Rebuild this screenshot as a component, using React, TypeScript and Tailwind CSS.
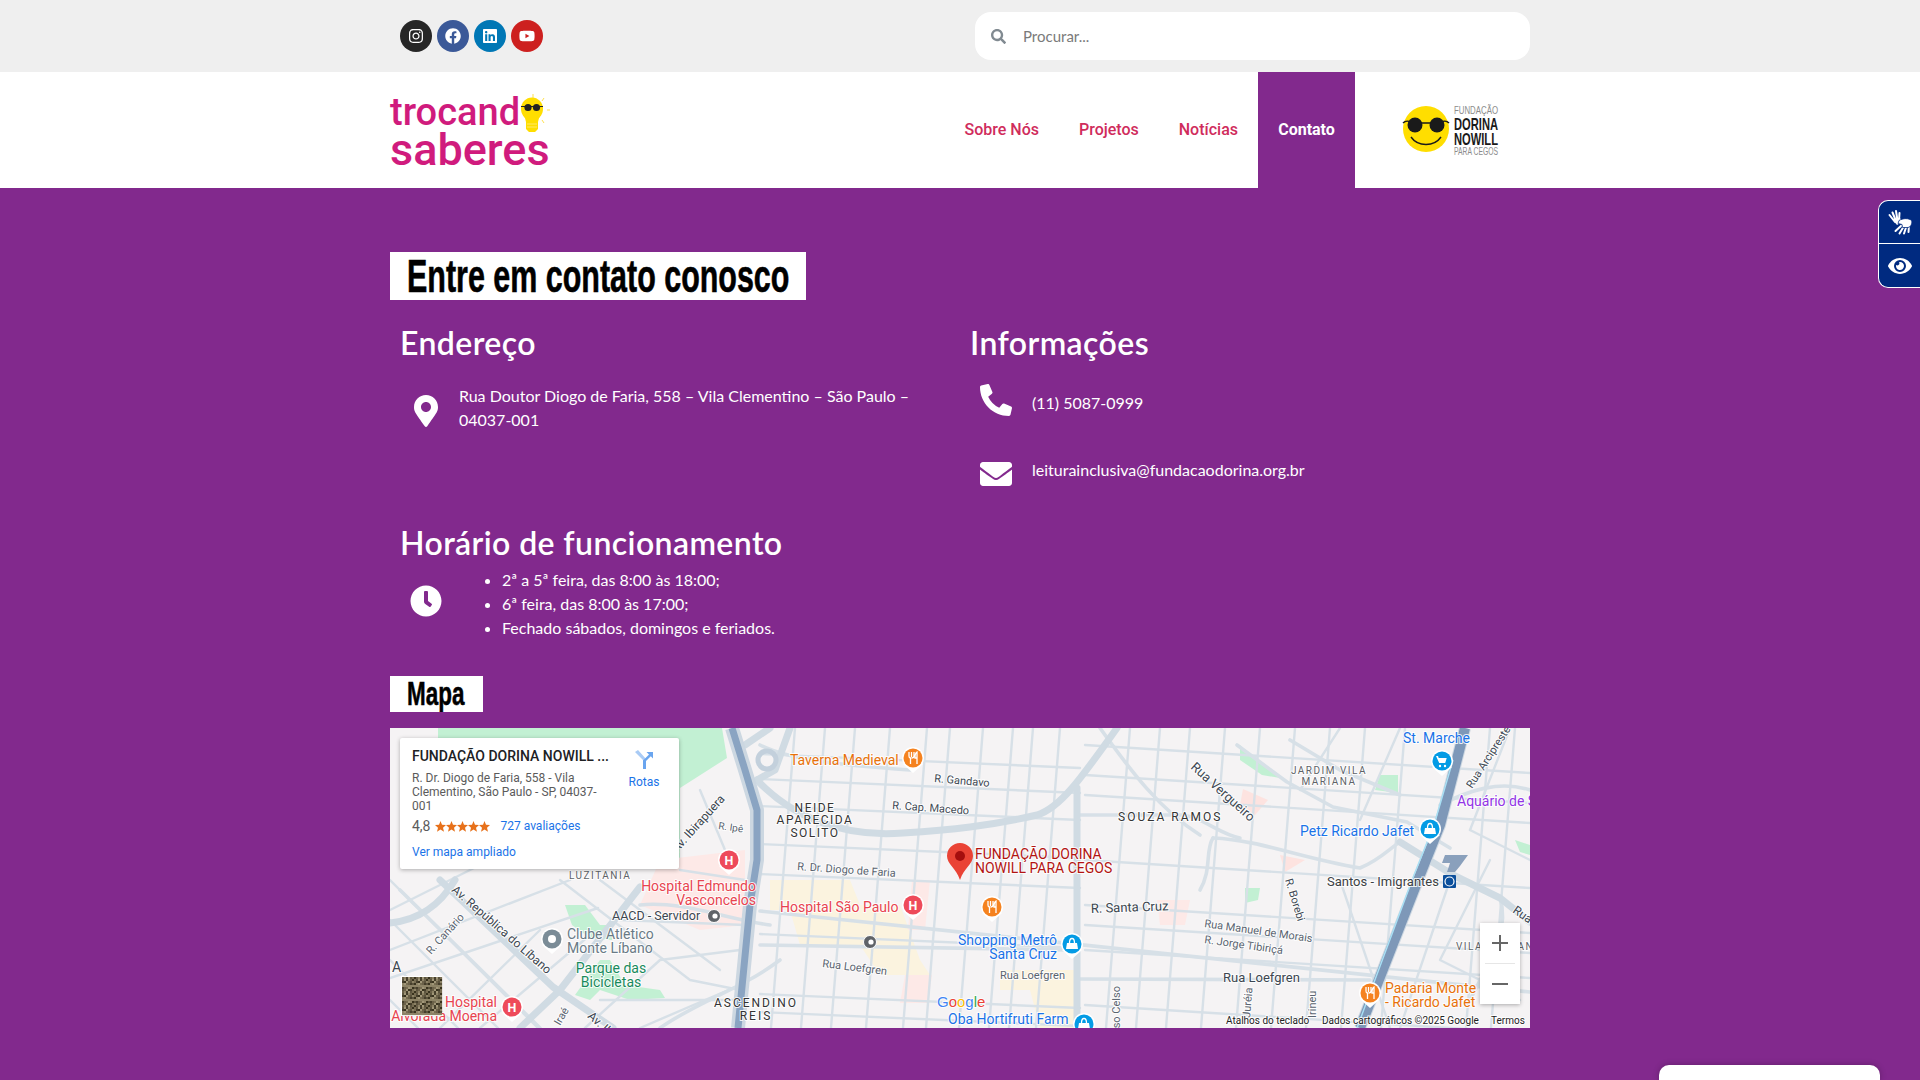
import type { ReactNode } from 'react';
import { FaClock, FaEnvelope, FaEye, FaFacebook, FaInstagram, FaLinkedin, FaMapMarkerAlt, FaPhoneAlt, FaSearch, FaYoutube } from 'react-icons/fa';

const socials = [
  { icon: FaInstagram, bg: 'bg-[#262626]' },
  { icon: FaFacebook, bg: 'bg-[#3b5998]' },
  { icon: FaLinkedin, bg: 'bg-[#0077b5]' },
  { icon: FaYoutube, bg: 'bg-[#cd201f]' },
];

const BLUE = '#1a73e8';
const ORANGE = '#e8710a';
const RED = '#e8434f';
const DARK = '#414a55';

function Bulb() {
  return (
    <svg viewBox="0 0 32 42" className="w-[32px] h-[42px] shrink-0 mt-[4px]">
      <g stroke="#ffe14d" strokeWidth="1">
        <path d="M13 1v4M24 5l-2 3M27 17h3M22 27l2 3" />
      </g>
      <ellipse cx="12" cy="16" rx="11" ry="11.5" fill="#ffde00" />
      <path d="M5 25h14l-1 4v7l-3 3H9l-3-3v-7z" fill="#ffde00" />
      <path d="M7 31h10M7 34h10" stroke="#ffe96a" strokeWidth="1" />
      <path d="M1 13.5h22" stroke="#222" strokeWidth="1" />
      <circle cx="8" cy="14.5" r="3.6" fill="#222" />
      <circle cx="16.5" cy="14.5" r="3.6" fill="#222" />
    </svg>
  );
}

function DorinaLogo() {
  return (
    <svg viewBox="1400 104 100 54" className="w-[100px] h-[54px] block">
      <circle cx="1426" cy="130" r="23" fill="#ffde00" />
      <path d="M1403 124c3-3 7-2 10 1M1449 124c-3-3-7-2-10 1M1418 124h16" stroke="#1a1a1a" strokeWidth="1.5" fill="none" />
      <circle cx="1415" cy="126" r="7.5" fill="#1a1a1a" />
      <circle cx="1437" cy="126" r="7.5" fill="#1a1a1a" />
      <path d="M1411 138c7 10 23 10 30 0" stroke="#1a1a1a" strokeWidth="1.4" fill="none" />
      <g className="[font-family:'Liberation_Sans',sans-serif]">
        <text x="1454" y="115" fontSize="11" fill="#8c8c8c" textLength="44" lengthAdjust="spacingAndGlyphs">FUNDAÇÃO</text>
        <text x="1454" y="131" fontSize="17" fontWeight="700" fill="#1a1a1a" textLength="44" lengthAdjust="spacingAndGlyphs">DORINA</text>
        <text x="1454" y="146" fontSize="17" fontWeight="700" fill="#1a1a1a" textLength="44" lengthAdjust="spacingAndGlyphs">NOWILL</text>
        <text x="1454" y="156" fontSize="10" fill="#8c8c8c" textLength="44" lengthAdjust="spacingAndGlyphs">PARA CEGOS</text>
      </g>
    </svg>
  );
}

function HandsIcon() {
  return (
    <svg viewBox="0 0 26 26" className="w-[26px] h-[26px]">
      <g stroke="#fff" strokeWidth="2" strokeLinecap="round" fill="none">
        <path d="M8 13L2.5 6M9 12L5.5 3.5M10.5 11.5L9 2M12 12L12.5 4" />
        <path d="M15 16L8.5 22M17 17L12.5 24.5M19.5 17L17 24.5M22 16L21.5 23" />
      </g>
      <path d="M5 10L13 9L15 13L10 16z" fill="#fff" />
      <path d="M12 11.5C16 9 22 9 24.5 11.5C25.5 14 24 18 21 18.5H15.5L15 15.5L11 14.5z" fill="#fff" stroke="#002a80" strokeWidth="0.8" />
    </svg>
  );
}

function L({ x, y, c = DARK, s = 11, a = 'start', r = 0, ls = 0, w = 400, children }: { x: number; y: number; c?: string; s?: number; a?: 'start' | 'middle' | 'end'; r?: number; ls?: number; w?: number; children: ReactNode }) {
  return (
    <text x={x} y={y} fill={c} fontSize={s} textAnchor={a} letterSpacing={ls} fontWeight={w} stroke="#fff" strokeWidth="2" strokeOpacity="0.85" paintOrder="stroke" transform={r ? `rotate(${r} ${x} ${y})` : undefined}>
      {children}
    </text>
  );
}

function Pin({ x, y, c, kind }: { x: number; y: number; c: string; kind: 'h' | 'food' | 'bag' | 'cart' | 'dot' }) {
  return (
    <g>
      <path d={`M${x - 10} ${y + 6}L${x} ${y + 15}L${x + 10} ${y + 6}z`} fill="#fff" />
      <circle cx={x} cy={y} r="11" fill="#fff" />
      <circle cx={x} cy={y} r="9.5" fill={c} />
      {kind === 'h' && <text x={x} y={y + 4.5} fontSize="12.5" fontWeight="700" fill="#fff" textAnchor="middle">H</text>}
      {kind === 'food' && <path d={`M${x - 4} ${y - 6}v4c0 1.5 1 2 1.5 2v6M${x - 1.5} ${y - 6}v5M${x + 1} ${y - 6}v4c0 1.5-1 2-2.5 2M${x + 4} ${y + 6}v-12c-2 1-2 4-2 6h2`} stroke="#fff" strokeWidth="1.3" fill="none" />}
      {kind === 'bag' && (
        <g>
          <path d={`M${x - 5} ${y - 1}h10l1 6h-12z`} fill="#fff" />
          <path d={`M${x - 2.5} ${y - 1}c0-6 5-6 5 0`} stroke="#fff" strokeWidth="1.3" fill="none" />
        </g>
      )}
      {kind === 'cart' && (
        <g fill="#fff">
          <path d={`M${x - 6} ${y - 5}h2l.7 2h8l-1.5 5h-6z`} />
          <circle cx={x - 2} cy={y + 5} r="1.2" />
          <circle cx={x + 3} cy={y + 5} r="1.2" />
        </g>
      )}
      {kind === 'dot' && <circle cx={x} cy={y} r="4" fill="#fff" />}
    </g>
  );
}

function EyeDot({ x, y }: { x: number; y: number }) {
  return (
    <g>
      <circle cx={x} cy={y} r="6.5" fill="#5f6368" stroke="#fff" strokeWidth="1" />
      <circle cx={x + 1} cy={y} r="2.6" fill="#fff" />
    </g>
  );
}

// ruas do mapa, em coordenadas da pagina
const wide = [
  'M757 780C790 815 840 838 903 833C950 830 990 826 1037 815C1060 808 1080 780 1117 728',
  'M1077 788V1028',
  'M440 880L553 987L613 1028',
  'M640 887L560 990L520 1028',
  'M390 923C420 920 440 905 455 880',
  'M1400 842L1453 875L1500 898L1530 922',
  'M745 745L770 728',
  'M757 780L775 770L790 728',
];
const medium = [
  'M1237 745L1287 782L1333 807L1407 822L1450 848',
  'M1213 838C1260 840 1300 858 1360 868C1380 860 1390 848 1400 842',
  'M1213 838C1205 850 1212 870 1200 890',
  'M1077 815H1180C1200 815 1220 835 1240 838',
  'M1077 979L1370 980',
  'M760 911L1530 992',
  'M1100 728C1130 770 1160 810 1200 835',
  'M1440 805C1470 790 1500 780 1530 790',
  'M760 945L1070 950',
  'M640 905C680 900 730 920 770 925',
  'M660 1028C700 1000 740 990 780 960',
  'M400 890L540 1028',
  'M1400 795L1340 770L1290 740',
  'M1500 898C1510 930 1490 960 1470 1000',
  'M760 745C790 760 840 765 910 770',
];
const thinV = [785, 815, 845, 880, 917, 940, 973, 1003, 1023, 1050, 1120, 1150, 1180, 1215, 1250, 1285, 1320, 1355, 1395, 1480, 1505];
const thinH = [760, 785, 812, 850, 880, 940, 1000, 1018];
const thin = [
  ...thinV.map((x) => `M${x + 10} 728L${x - 14} 1028`),
  ...thinH.map((y) => `M760 ${y - 6}L1080 ${y + 8}`),
  ...[745, 775, 795, 860, 905, 925, 950, 1005].map((y) => `M1085 ${y}L1530 ${y + 28}`),
  ...[880, 920, 960, 1000].map((y) => `M390 ${y}L${390 + (1028 - y)} 1028`),
  ...[960, 1000, 1028].map((y) => `M390 ${y - 50}L${y - 430} ${y - 120}`),
  'M440 1028L540 930',
  'M480 1028L590 935',
  'M560 880L690 980L740 990',
  'M600 880L720 970',
  'M585 1028L660 960L740 950',
  'M640 1028L740 985',
  'M680 870L745 880',
  'M620 920L745 925',
  'M600 1000H745',
  'M725 850L700 790',
  'M1400 728L1360 820',
  'M1340 728L1300 790',
  'M1510 728L1470 830',
  'M1470 830L1530 860',
  'M1450 880L1400 1028',
  'M1340 880L1390 1028',
  'M1490 860L1440 960L1520 1000',
];

function Thumb() {
  const cells = [];
  const tones = ['#6b6149', '#8d8366', '#463f2c', '#a19779', '#5c543e', '#776d52', '#39331f'];
  for (let i = 0; i < 20; i++) {
    for (let j = 0; j < 19; j++) {
      const v = (i * i * 7 + j * j * 11 + i * j * 5 + i) % 7;
      cells.push(<rect key={`${i}-${j}`} x={402 + i * 2} y={977 + j * 2} width="2.1" height="2.1" fill={tones[v]} />);
    }
  }
  return (
    <g>
      <rect x="401" y="976" width="41" height="40" fill="#fff" />
      {cells}
    </g>
  );
}

function MapArt() {
  return (
    <svg viewBox="390 728 1140 300" className="block w-[1140px] h-[300px] [font-family:Roboto,sans-serif]">
      <rect x="390" y="728" width="1140" height="300" fill="#f5f3f4" />
      {/* areas */}
      <path d="M438 728H722L727 758L680 788V869H438z" fill="#c2f0d3" />
      <path d="M660 860L745 850V925L700 930L640 905z" fill="#fde9e7" />
      <path d="M770 880H850L860 905H900L920 960L930 975H880L860 945H800L790 910H770z" fill="#fbf3df" />
      <path d="M1000 970H1075V1028H1040L1030 990H1000z" fill="#fbf3df" />
      <path d="M905 975H932L928 1003H900z" fill="#fde9e7" />
      <path d="M912 880H930L925 930H908z" fill="#fde9e7" />
      <path d="M1157 900H1190L1185 925H1160z" fill="#fde9e7" />
      <path d="M1243 789L1268 800L1255 815L1240 805z" fill="#fde3e0" />
      <path d="M1280 855L1305 860L1285 872z" fill="#fde3e0" />
      <path d="M1240 745L1250 755L1280 778L1262 775L1240 760z" fill="#c2f0d3" />
      <path d="M1380 775L1398 775V793L1375 790z" fill="#c2f0d3" />
      <path d="M1245 888H1260L1258 900L1245 903z" fill="#c2f0d3" />
      <path d="M1515 840L1530 845V855L1520 852z" fill="#c2f0d3" />
      <path d="M565 905H585L600 925H612L612 940L590 938L572 925z" fill="#c2f0d3" />
      <path d="M575 995L600 960H610L625 985L660 990L665 998L630 1000L600 990L590 1000z" fill="#c2f0d3" />
      {/* ruas */}
      <g fill="none" stroke="#d7e0e7" strokeLinecap="round" strokeLinejoin="round">
        {thin.map((d) => <path key={d} d={d} strokeWidth="2.4" />)}
        {medium.map((d) => <path key={d} d={d} strokeWidth="3.6" />)}
        {wide.map((d) => <path key={d} d={d} strokeWidth="7" stroke="#d0dbe3" />)}
        <circle cx="767" cy="760" r="9" strokeWidth="5" stroke="#c3d0dc" />
      </g>
      {/* vias expressas */}
      <g fill="none" strokeLinejoin="round">
        <path d="M732 728L745 770L757 810L757 860L750 905L738 1028" stroke="#ccd7e1" strokeWidth="14" />
        <path d="M732 728L745 770L757 810L757 860L750 905L738 1028" stroke="#8aa4c2" strokeWidth="7" />
        <path d="M1465 728L1440 825L1420 875L1360 1028" stroke="#ccd7e1" strokeWidth="12" />
        <path d="M1465 728L1440 825L1420 875L1360 1028" stroke="#7e98b8" strokeWidth="10" />
        <path d="M1453 760L1434 825L1414 875L1357 1028" stroke="#a8e0f5" strokeWidth="1.4" />
      </g>
      <path d="M1445 855H1468L1460 866L1455 872H1447L1450 863H1442z" fill="#8aa0bc" />

      <L x={790} y={765} c={ORANGE} s={14}>Taverna Medieval</L>
      <Pin x={913} y={758} c="#f5821f" kind="food" />
      <L x={934} y={782} r={5}>R. Gandavo</L>
      <L x={892} y={809} r={4}>R. Cap. Macedo</L>
      <L x={1118} y={821} c="#333" s={12} ls={2}>SOUZA RAMOS</L>
      <L x={1190} y={768} r={42} s={13}>Rua Vergueiro</L>
      <L x={1329} y={774} a="middle" s={10} ls={1.5} c="#5f6368">JARDIM VILA</L>
      <L x={1329} y={785} a="middle" s={10} ls={1.5} c="#5f6368">MARIANA</L>
      <L x={1403} y={743} c={BLUE} s={14}>St. Marche</L>
      <Pin x={1442} y={761} c="#039be5" kind="cart" />
      <L x={1472} y={789} r={-57}>Rua Arcipreste</L>
      <L x={1457} y={806} c="#9334e6" s={14}>Aquário de São Paulo</L>
      <L x={1300} y={836} c={BLUE} s={14}>Petz Ricardo Jafet</L>
      <Pin x={1430} y={829} c="#039be5" kind="bag" />
      <L x={1327} y={886} s={13} c="#3c4043">Santos - Imigrantes</L>
      <rect x="1443" y="875" width="13" height="13" rx="1" fill="#0b4f9c" />
      <circle cx="1449.5" cy="881.5" r="4.5" fill="none" stroke="#fff" strokeWidth="1.2" />
      <L x={1512} y={912} r={35} s={12}>Rua</L>
      <L x={1285} y={880} r={73}>R. Borebi</L>
      <L x={1204} y={927} r={8} c="#5a6470">Rua Manuel de Morais</L>
      <L x={1204} y={943} r={8} c="#5a6470">R. Jorge Tibiriçá</L>
      <L x={1223} y={982} s={13} c="#3c4650">Rua Loefgren</L>
      <L x={1456} y={950} s={10} ls={1.5} c="#5f6368">VILA MARIANA</L>
      <Pin x={1370} y={993} c="#f5821f" kind="food" />
      <L x={1385} y={993} c={ORANGE} s={14}>Padaria Monte</L>
      <L x={1385} y={1007} c={ORANGE} s={14}>- Ricardo Jafet</L>
      <L x={1250} y={1018} r={-85} c="#5a6470">Juréia</L>
      <L x={1316} y={1018} r={-90} c="#5a6470">Irineu</L>

      <L x={975} y={859} c="#b31412" s={14}>FUNDAÇÃO DORINA</L>
      <L x={975} y={873} c="#b31412" s={14}>NOWILL PARA CEGOS</L>
      <path d="M960 880C956 868 947 864 947 856A13 13 0 1 1 973 856C973 864 964 868 960 880z" fill="#ea4335" />
      <circle cx="960" cy="856" r="5" fill="#a50e0e" />

      <L x={780} y={912} c={RED} s={14}>Hospital São Paulo</L>
      <Pin x={913} y={905} c="#ee4a5a" kind="h" />
      <Pin x={992} y={907} c="#f5821f" kind="food" />
      <L x={1057} y={945} a="end" c={BLUE} s={14}>Shopping Metrô</L>
      <L x={1057} y={959} a="end" c={BLUE} s={14}>Santa Cruz</L>
      <Pin x={1072} y={944} c="#039be5" kind="bag" />
      <L x={1091} y={913} r={-2} s={13} c="#3c4650">R. Santa Cruz</L>
      <L x={1000} y={979} c="#5a6470">Rua Loefgren</L>
      <L x={822} y={967} r={7} c="#5a6470">Rua Loefgren</L>
      <EyeDot x={870} y={942} />
      <L x={797} y={870} r={4} c="#5a6470">R. Dr. Diogo de Faria</L>
      <text x="937" y="1007" fontSize="15" fontWeight="500" stroke="#fff" strokeWidth="1.5" paintOrder="stroke" className="[font-family:'Liberation_Sans',sans-serif]">
        <tspan fill="#4285f4">G</tspan><tspan fill="#ea4335">o</tspan><tspan fill="#fbbc05">o</tspan><tspan fill="#4285f4">g</tspan><tspan fill="#34a853">l</tspan><tspan fill="#ea4335">e</tspan>
      </text>
      <L x={948} y={1024} c={BLUE} s={14}>Oba Hortifruti Farm</L>
      <Pin x={1084} y={1024} c="#039be5" kind="bag" />
      <L x={1120} y={986} r={-90} a="end" c="#5a6470">Afonso Celso</L>

      <L x={815} y={812} a="middle" s={12} ls={1.5} c="#333">NEIDE</L>
      <L x={815} y={824} a="middle" s={12} ls={1.5} c="#333">APARECIDA</L>
      <L x={815} y={837} a="middle" s={12} ls={1.5} c="#333">SOLITO</L>
      <L x={569} y={879} s={10} ls={1.5} c="#5f6368">LUZITANIA</L>
      <L x={718} y={829} r={8} s={10} c="#5a6470">R. Ipê</L>
      <L x={677} y={853} r={-48} s={12} c="#3c4650">Av. Ibirapuera</L>
      <Pin x={729} y={860} c="#ee4a5a" kind="h" />
      <L x={756} y={891} a="end" c={RED} s={14}>Hospital Edmundo</L>
      <L x={756} y={905} a="end" c={RED} s={14}>Vasconcelos</L>
      <L x={612} y={920} s={12.5} c="#3c4650">AACD - Servidor</L>
      <EyeDot x={714} y={916} />
      <Pin x={552} y={939} c="#7b8c97" kind="dot" />
      <L x={567} y={939} c="#6a7a86" s={14}>Clube Atlético</L>
      <L x={567} y={953} c="#6a7a86" s={14}>Monte Líbano</L>
      <L x={611} y={973} a="middle" c="#188a5c" s={14}>Parque das</L>
      <L x={611} y={987} a="middle" c="#188a5c" s={14}>Bicicletas</L>
      <L x={451} y={891} r={41} s={12} c="#3c4650">Av. República do Líbano</L>
      <L x={431} y={955} r={-48} c="#5a6470">R. Canário</L>
      <L x={392} y={972} s={14} c="#3c4650">A</L>
      <L x={497} y={1007} a="end" c={RED} s={14}>Hospital</L>
      <L x={497} y={1021} a="end" c={RED} s={14}>Alvorada Moema</L>
      <Pin x={512} y={1007} c="#ee4a5a" kind="h" />
      <Thumb />
      <L x={756} y={1007} a="middle" s={12} ls={2} c="#333">ASCENDINO</L>
      <L x={756} y={1020} a="middle" s={12} ls={2} c="#333">REIS</L>
      <L x={587} y={1017} r={42} s={12} c="#3c4650">Av. Ibirapuera</L>
      <L x={560} y={1026} r={-60} c="#5a6470">Iraé</L>
      <L x={1226} y={1024} s={10} c="#222">Atalhos do teclado</L>
      <L x={1322} y={1024} s={10} c="#222">Dados cartográficos ©2025 Google</L>
      <L x={1491} y={1024} s={10} c="#222">Termos</L>
    </svg>
  );
}

function Stars() {
  return (
    <svg viewBox="0 0 55 11" className="w-[55px] h-[11px]">
      {[0, 11, 22, 33, 44].map((x) => (
        <path key={x} transform={`translate(${x} 0)`} d="M5.5 0L7 3.8L11 4.1L8 6.7L9 10.8L5.5 8.6L2 10.8L3 6.7L0 4.1L4 3.8z" fill="#e7711b" />
      ))}
    </svg>
  );
}

function MapCard() {
  return (
    <div className="absolute left-[10px] top-[10px] w-[279px] h-[131px] bg-white rounded-[2px] shadow-[0_1px_4px_rgba(0,0,0,0.3)] pl-[12px] pt-[9px] [font-family:Roboto,sans-serif] flex">
      <div className="w-[190px]">
        <div className="text-[14px] font-medium text-[#202124] leading-[18px] whitespace-nowrap">FUNDAÇÃO DORINA NOWILL ...</div>
        <div className="text-[12px] text-[#5b5b5b] leading-[14px] mt-[6px]">R. Dr. Diogo de Faria, 558 - Vila Clementino, São Paulo - SP, 04037-001</div>
        <div className="flex items-center mt-[5px] h-[16px] text-[12px]">
          <span className="text-[14px] text-[#5b5b5b] mr-[4px]">4,8</span>
          <Stars />
          <span className="ml-[11px] text-[#1a73e8] whitespace-nowrap">727 avaliações</span>
        </div>
        <div className="text-[12px] text-[#1a73e8] mt-[9px] whitespace-nowrap">Ver mapa ampliado</div>
      </div>
      <div className="ml-[20px] w-[44px] flex flex-col items-center pt-[3px]">
        <svg viewBox="0 0 20 20" className="w-[20px] h-[20px]">
          <path d="M1 2L9 10V19H12V9L4 0z" fill="#a9cbf5" />
          <path d="M9 19V10.5L15 4.5L12.5 2H19V8.5L16.8 6.3L12 11V19z" fill="#6aa5ef" />
        </svg>
        <span className="text-[12px] text-[#1a73e8] mt-[3px]">Rotas</span>
      </div>
    </div>
  );
}

export default function App() {
  return (
    <div className="h-screen overflow-hidden bg-[#82298d] [font-family:Lato,sans-serif]">
      <div className="bg-[#efefef] h-[72px]">
        <div className="w-[1140px] mx-auto h-full flex items-center justify-between">
          <div className="flex gap-[5px] pl-[10px]">
            {socials.map(({ icon: Icon, bg }, i) => (
              <div key={i} className={`w-[32px] h-[32px] rounded-full flex items-center justify-center text-white ${bg}`}>
                <Icon className="w-[16px] h-[16px]" />
              </div>
            ))}
          </div>
          <div className="w-[555px] h-[48px] bg-white rounded-[16px] flex items-center pl-[16px]">
            <FaSearch className="w-[15px] h-[15px] text-[#818a91]" />
            <input placeholder="Procurar..." className="ml-[17px] flex-1 outline-none text-[15px] placeholder:text-[#7a7a7a]" />
          </div>
        </div>
      </div>

      <header className="bg-white h-[116px]">
        <div className="w-[1140px] mx-auto h-full flex items-center">
          <div className="text-[#d01b7d] [font-family:Roboto,sans-serif] font-medium -mt-[1px]">
            <div className="flex items-start h-[40px]">
              <span className="text-[38px] leading-[46px] w-[130px] whitespace-nowrap">trocand</span>
              <Bulb />
            </div>
            <div className="text-[45px] leading-[42px] w-[162px] whitespace-nowrap">saberes</div>
          </div>
          <nav className="ml-auto flex h-full items-center [font-family:Roboto,sans-serif] text-[16px] font-medium text-[#d02c5c]">
            <a className="px-[20px] whitespace-nowrap">Sobre Nós</a>
            <a className="px-[20px] whitespace-nowrap">Projetos</a>
            <a className="px-[20px] whitespace-nowrap">Notícias</a>
            <a className="h-full w-[97px] flex items-center justify-center bg-[#82298d] text-white font-bold">Contato</a>
          </nav>
          <div className="ml-[45px] mr-[30px]">
            <DorinaLogo />
          </div>
        </div>
      </header>

      <main className="w-[1140px] mx-auto pt-[64px] text-white">
        <div className="w-[416px] h-[48px] bg-white overflow-hidden pl-[17px]">
          <div className="origin-left scale-x-[0.662] whitespace-nowrap text-black font-bold text-[46px] leading-[48px] [-webkit-text-stroke:0.6px_black] [font-family:'Liberation_Sans',sans-serif]">Entre em contato conosco</div>
        </div>

        <div className="grid grid-cols-2 mt-[22px]">
          <div className="pl-[10px]">
            <h2 className="text-[32px] font-semibold tracking-[0.4px] leading-[42px]">Endereço</h2>
            <div className="flex items-center mt-[20px]">
              <FaMapMarkerAlt className="w-[24px] h-[32px] ml-[14px] mt-[6px] shrink-0" />
              <p className="ml-[21px] text-[16px] leading-[24px] w-[470px]">Rua Doutor Diogo de Faria, 558 – Vila Clementino – São Paulo – 04037-001</p>
            </div>
          </div>
          <div className="pl-[10px]">
            <h2 className="text-[32px] font-semibold tracking-[0.4px] leading-[42px]">Informações</h2>
            <div className="flex items-center mt-[20px] pl-[10px]">
              <FaPhoneAlt className="w-[32px] h-[32px]" />
              <span className="ml-[20px] text-[16px] mt-[5px]">(11) 5087-0999</span>
            </div>
            <div className="flex items-start mt-[42px] pl-[10px]">
              <FaEnvelope className="w-[32px] h-[32px]" />
              <span className="ml-[20px] text-[16px] leading-[24px]">leiturainclusiva@fundacaodorina.org.br</span>
            </div>
          </div>
        </div>

        <div className="pl-[10px] mt-[32px]">
          <h2 className="text-[32px] font-semibold tracking-[0.4px] leading-[42px]">Horário de funcionamento</h2>
          <div className="flex items-start mt-[4px]">
            <FaClock className="w-[32px] h-[32px] ml-[10px] mt-[17px] shrink-0" />
            <ul className="list-disc ml-[60px] text-[16px] leading-[24px]">
              <li>2ª a 5ª feira, das 8:00 às 18:00;</li>
              <li>6ª feira, das 8:00 às 17:00;</li>
              <li>Fechado sábados, domingos e feriados.</li>
            </ul>
          </div>
        </div>

        <div className="w-[93px] h-[36px] bg-white overflow-hidden pl-[17px] mt-[36px]">
          <div className="origin-left scale-x-[0.66] whitespace-nowrap text-black font-bold text-[34px] leading-[35px] [-webkit-text-stroke:0.5px_black] [font-family:'Liberation_Sans',sans-serif]">Mapa</div>
        </div>

        <div className="relative mt-[16px] h-[300px] overflow-hidden">
          <MapArt />
          <MapCard />
          <div className="absolute left-[1090px] top-[195px] w-[40px] h-[81px] bg-white shadow-[0_1px_4px_rgba(0,0,0,0.3)] flex flex-col items-center text-[#666]">
            <div className="h-[40px] flex items-center justify-center">
              <svg viewBox="0 0 18 18" className="w-[18px] h-[18px]"><path d="M8 1h2v7h7v2h-7v7H8v-7H1V8h7z" fill="#666" /></svg>
            </div>
            <div className="w-[30px] h-px bg-[#e6e6e6]" />
            <div className="h-[40px] flex items-center justify-center">
              <svg viewBox="0 0 18 18" className="w-[18px] h-[18px]"><path d="M1 8h16v2H1z" fill="#666" /></svg>
            </div>
          </div>
        </div>
      </main>

      <div className="fixed right-0 top-[200px] w-[42px] h-[88px] bg-[#002a80] border border-r-0 border-white rounded-l-[10px] text-white flex flex-col">
        <div className="h-[43px] flex items-center justify-center border-b border-white">
          <HandsIcon />
        </div>
        <div className="flex-1 flex items-center justify-center">
          <FaEye className="w-[24px] h-[24px]" />
        </div>
      </div>
      <div className="fixed right-[40px] bottom-0 w-[221px] h-[15px] bg-white rounded-t-[10px] shadow-[0_0_6px_rgba(0,0,0,0.25)]" />
    </div>
  );
}
